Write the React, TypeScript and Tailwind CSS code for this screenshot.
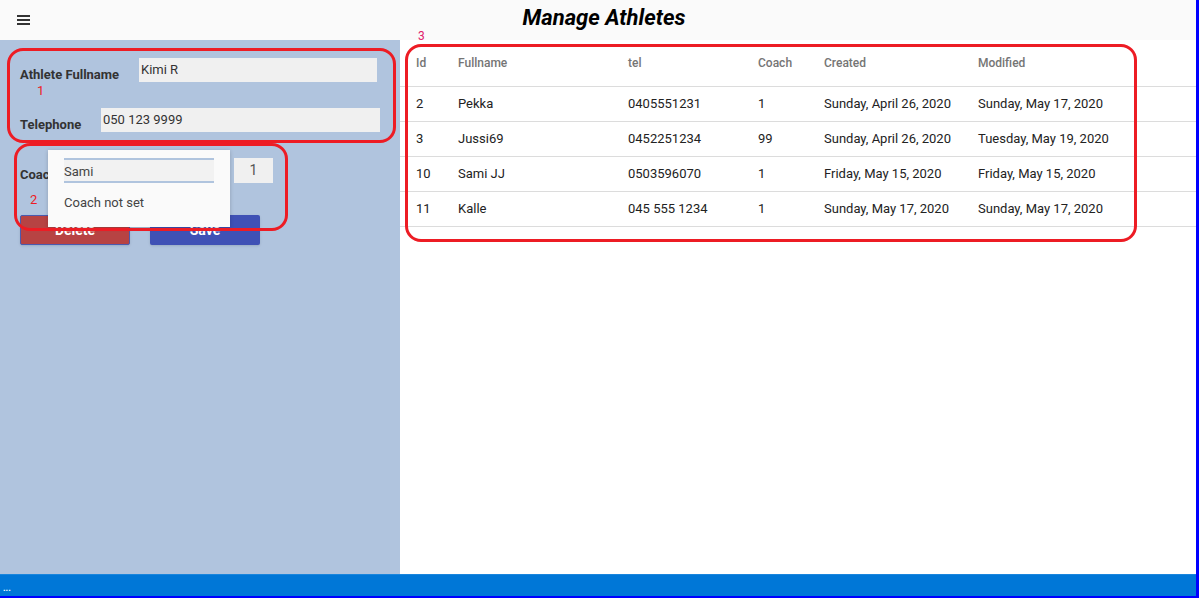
import React from 'react';

const athletes = [
  { id: 2, name: 'Pekka', tel: '0405551231', coach: 1, created: 'Sunday, April 26, 2020', modified: 'Sunday, May 17, 2020' },
  { id: 3, name: 'Jussi69', tel: '0452251234', coach: 99, created: 'Sunday, April 26, 2020', modified: 'Tuesday, May 19, 2020' },
  { id: 10, name: 'Sami JJ', tel: '0503596070', coach: 1, created: 'Friday, May 15, 2020', modified: 'Friday, May 15, 2020' },
  { id: 11, name: 'Kalle', tel: '045 555 1234', coach: 1, created: 'Sunday, May 17, 2020', modified: 'Sunday, May 17, 2020' },
];

const cols = 'grid grid-cols-[42px_170px_130px_66px_154px_1fr]';

function Marker({ className }: { className: string }) {
  return <div className={`absolute border-[3px] border-[#ed1c24] rounded-[16px] pointer-events-none ${className}`} />;
}

export default function App() {
  return (
    <div
      className="relative w-[1199px] h-[598px] flex flex-col border-r-[3px] border-b-2 border-[#0000ff] overflow-hidden text-[#222]"
      style={{ fontFamily: 'Roboto, "Noto Sans", sans-serif' }}
    >
      <header className="h-10 shrink-0 bg-[#fafafa] flex items-center relative">
        <button type="button" className="ml-[17px] flex flex-col gap-[2px] w-[13px]">
          <span className="h-[2px] bg-[#333]" />
          <span className="h-[2px] bg-[#333]" />
          <span className="h-[2px] bg-[#333]" />
        </button>
        <h1 className="absolute left-[12px] right-0 top-[1px] text-center text-[22px] font-bold italic text-black pointer-events-none">
          Manage Athletes
        </h1>
      </header>

      <div className="flex flex-1 min-h-0">
        {/* edit form */}
        <aside className="w-[400px] shrink-0 bg-[#b0c4de] relative">
          <div className="pt-[18px] pl-5">
            <div className="flex items-start h-[50px]">
              <label className="text-[13px] font-bold text-[#333] mt-[7px] w-[119px]">Athlete Fullname</label>
              <div className="w-[238px] h-6 bg-[#f0f0f0] text-[13px] text-[#333] pl-[2px] leading-6">Kimi R</div>
            </div>
            <div className="flex items-start h-[50px]">
              <label className="text-[13px] font-bold text-[#333] mt-[7px] w-[81px]">Telephone</label>
              <div className="w-[279px] h-6 bg-[#f0f0f0] text-[13px] text-[#333] pl-[2px] leading-6">050 123 9999</div>
            </div>
            <div className="flex items-start h-[57px]">
              <label className="text-[13px] font-bold text-[#333] mt-[7px] w-[214px]">Coach</label>
              <div className="w-[39px] h-[25px] bg-[#f0f0f0] text-[14px] text-[#555] text-center leading-[25px]">1</div>
            </div>
            <div className="flex gap-5">
              <button type="button" className="w-[110px] h-[30px] bg-[#b74343] border border-[#4b5aaf] rounded-[2px] text-white font-bold text-[14px] shadow-sm">
                Delete
              </button>
              <button type="button" className="w-[110px] h-[30px] bg-[#3f51b5] rounded-[2px] text-white font-bold text-[14px] shadow-sm">
                Save
              </button>
            </div>
          </div>

          {/* open coach dropdown */}
          <div className="absolute left-[48px] top-[110px] w-[182px] h-[77px] bg-[#fafafa] shadow-[0_1px_4px_rgba(0,0,0,0.2)] pt-2 px-4">
            <div className="h-[25px] bg-[#f2f2f2] border-y-2 border-[#b0c4de] text-[13px] text-[#444] leading-[23px]">Sami</div>
            <div className="mt-[10px] text-[13px] text-[#444]">Coach not set</div>
          </div>

          <span className="absolute left-[37px] top-[41px] text-[13px] text-[#ed1c24]">1</span>
          <span className="absolute left-[30px] top-[150px] text-[13px] text-[#ed1c24]">2</span>
        </aside>

        {/* athletes table */}
        <section className="flex-1 bg-white text-[13px]">
          <div className={`${cols} h-[47px] items-center border-b border-[#dcdcdc] text-[12px] font-medium text-[#757575]`}>
            <div className="pl-4">Id</div>
            <div className="pl-4">Fullname</div>
            <div className="pl-4">tel</div>
            <div className="pl-4">Coach</div>
            <div className="pl-4">Created</div>
            <div className="pl-4">Modified</div>
          </div>
          {athletes.map((a) => (
            <div key={a.id} className={`${cols} h-[35px] items-center border-b border-[#dcdcdc] text-[#222]`}>
              <div className="pl-4">{a.id}</div>
              <div className="pl-4">{a.name}</div>
              <div className="pl-4">{a.tel}</div>
              <div className="pl-4">{a.coach}</div>
              <div className="pl-4 whitespace-nowrap">{a.created}</div>
              <div className="pl-4 whitespace-nowrap">{a.modified}</div>
            </div>
          ))}
        </section>
      </div>

      <footer className="h-[22px] shrink-0 bg-[#0077d7] border-t border-[#1a86dd] text-white text-[9px] font-bold leading-[26px] pl-[3px]">
        ...
      </footer>

      {/* annotation marks */}
      <Marker className="left-[7px] top-[48px] w-[389px] h-[95px]" />
      <Marker className="left-[14px] top-[143px] w-[274px] h-[88px]" />
      <Marker className="left-[405px] top-[44px] w-[732px] h-[198px]" />
      <span className="absolute left-[418px] top-[27px] text-[12px] text-[#e0206a]">3</span>
    </div>
  );
}
